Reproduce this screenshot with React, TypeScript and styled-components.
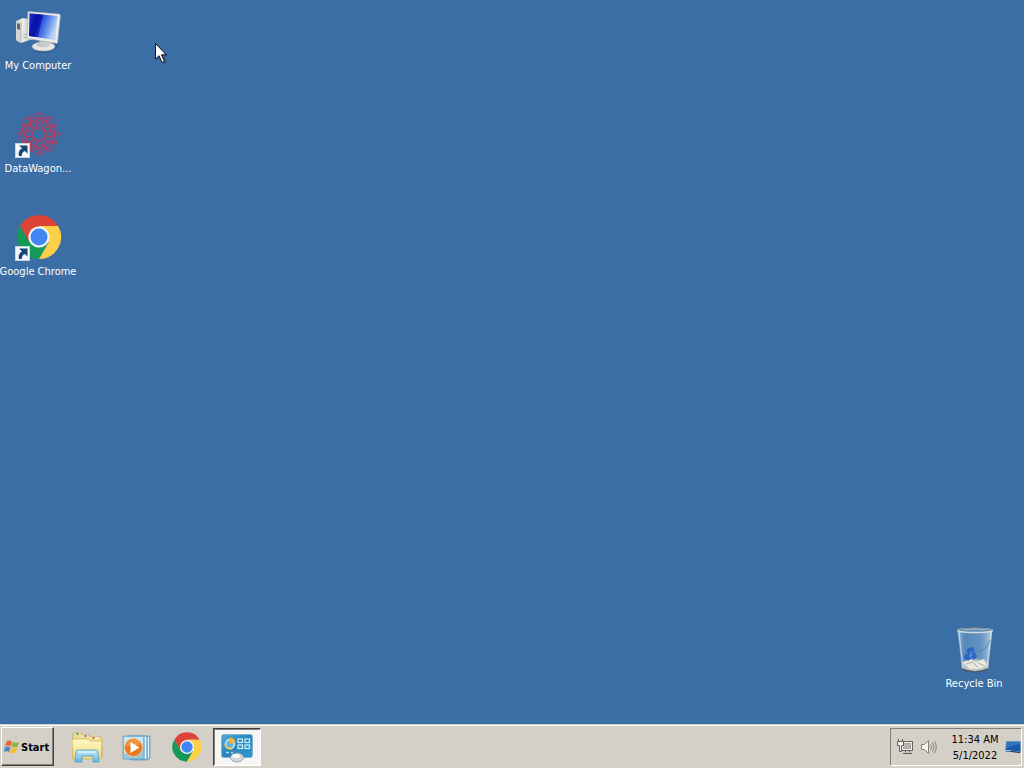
import React from 'react';
import styled, { createGlobalStyle } from 'styled-components';

const GlobalStyle = createGlobalStyle`
  * { box-sizing: border-box; }
  body {
    margin: 0;
    background: #3b6ea5;
    font-family: Tahoma, 'DejaVu Sans Condensed', 'DejaVu Sans', sans-serif;
    font-size: 11px;
    color: #000;
  }
  button { font: inherit; color: inherit; padding: 0; cursor: default; }
  svg { display: block; flex: none; }
`;

const Screen = styled.div`
  position: relative;
  min-height: 100vh;
  display: flex;
  flex-direction: column;
  overflow: hidden;
  background: #3b6ea5;
`;

const Desktop = styled.main`
  flex: 1;
  display: flex;
  justify-content: space-between;
  padding: 8px 12px 33px 0;
`;

const IconColumn = styled.div<{ $end?: boolean }>`
  display: flex;
  flex-direction: column;
  justify-content: ${(p) => (p.$end ? 'flex-end' : 'flex-start')};
  gap: 38px;
`;

const Shortcut = styled.button`
  position: relative;
  width: 76px;
  height: 65px;
  display: flex;
  flex-direction: column;
  align-items: center;
  gap: 3px;
  background: none;
  border: 0;
  color: #fff;
  line-height: 14px;
  white-space: nowrap;
`;

const ArrowBadge = styled.svg`
  position: absolute;
  left: 15px;
  top: 32px;
`;

const Pointer = styled.svg`
  position: absolute;
  left: 154px;
  top: 42px;
`;

const Taskbar = styled.footer`
  height: 44px;
  display: flex;
  align-items: stretch;
  padding: 2px 2px 2px 1px;
  background: #d4d0c8;
  border-top: 1px solid #d4d0c8;
  box-shadow: inset 0 1px #fff;
`;

const StartButton = styled.button`
  width: 53px;
  display: flex;
  align-items: center;
  gap: 1px;
  padding: 1px 0 0 2px;
  background: #d4d0c8;
  border: 1px solid;
  border-color: #fff #404040 #404040 #fff;
  box-shadow: inset -1px -1px #808080;
  font-weight: bold;
`;

const TaskButtons = styled.nav`
  flex: 1;
  display: flex;
  gap: 2px;
  padding: 1px 0 0 9px;
`;

const TaskButton = styled.button<{ $active?: boolean }>`
  width: 48px;
  display: flex;
  align-items: center;
  justify-content: center;
  border: 1px solid;
  border-color: ${(p) => (p.$active ? '#404040 #fff #fff #404040' : 'transparent')};
  box-shadow: ${(p) => (p.$active ? 'inset 1px 1px #808080' : 'none')};
  background: ${(p) => (p.$active ? '#f7f6f4' : 'none')};
`;

const Tray = styled.div`
  display: flex;
  align-items: center;
  margin-top: 1px;
  padding-left: 6px;
  border: 1px solid;
  border-color: #808080 #fff #fff #808080;
`;

const TrayButton = styled.button`
  display: flex;
  background: none;
  border: 0;
  margin-right: 8px;
`;

const Clock = styled.time`
  width: 60px;
  padding-top: 1px;
  text-align: center;
  line-height: 16px;
  white-space: nowrap;
`;

const ShowDesktop = styled.button`
  display: flex;
  background: none;
  border: 0;
`;

const ComputerIcon = () => (
  <svg width="48" height="48" viewBox="-1 0 48 48">
    <defs>
      <linearGradient id="pcScreen" x1="0" y1="0" x2="1" y2="0.35">
        <stop offset="0" stopColor="#1a2fc4" />
        <stop offset="0.38" stopColor="#0712ae" />
        <stop offset="0.5" stopColor="#2b55df" />
        <stop offset="0.75" stopColor="#6593ea" />
        <stop offset="1" stopColor="#b9d4f8" />
      </linearGradient>
      <linearGradient id="pcCase" x1="0" y1="0" x2="1" y2="0">
        <stop offset="0" stopColor="#b9bab9" />
        <stop offset="0.3" stopColor="#f2f1ec" />
        <stop offset="1" stopColor="#bdc1c2" />
      </linearGradient>
    </defs>
    <path d="M18 42 Q35 46 41 36 L44 34 Q42 46 24 45 Z" fill="#24476f" opacity=".4" />
    <path d="M1 13 L8 10 L17 12 L18 31 L6 35 L1 32 Z" fill="url(#pcCase)" />
    <path d="M1 13 L6 14 V35 L1 32 Z" fill="#d6d7d3" />
    <path d="M2 15 L5 16 V22 L2 21 Z" fill="#626a70" />
    <path d="M6 14 V35" stroke="#989c9e" strokeWidth=".7" />
    <path d="M8 27 L17 25 M8 30 L17 28" stroke="#9b9fa0" strokeWidth=".7" />
    <path d="M24 31 L34 33 L32 38 L25 37 Z" fill="#bfc3c4" />
    <ellipse cx="28.5" cy="38.5" rx="11.5" ry="4.5" fill="#e5e6e3" stroke="#abb0b2" strokeWidth=".6" />
    <ellipse cx="28" cy="37" rx="7" ry="2.2" fill="#c5c9ca" />
    <path d="M13 3.5 L44 6 Q45.5 6 45.3 8 L42.5 35.5 L12 30.5 Z" fill="#ebece9" stroke="#a4b0ba" strokeWidth=".6" />
    <path d="M14.5 5.2 L42.6 8 L40 32 L14 28 Z" fill="url(#pcScreen)" />
    <path d="M20 6 L28 7 L23 29 L14 28 Z" fill="#0a12a4" opacity=".65" />
  </svg>
);

const ROTATIONS = [0, 45, 90, 135];
const PETALS = [0, 30, 60, 90, 120, 150, 180, 210, 240, 270, 300, 330];

const DataWagonIcon = () => (
  <svg width="48" height="48" viewBox="-1 0 48 48" fill="none">
    {ROTATIONS.map((angle) => (
      <g key={angle} transform={`rotate(${angle} 24 23)`} stroke="#b83a68" opacity=".7">
        <ellipse cx="24" cy="23" rx="21" ry="12" strokeWidth="1" strokeDasharray="4 1" />
        <path d="M9 8 H39 M9 38 H39" strokeDasharray="3 2" />
      </g>
    ))}
    {PETALS.map((angle) => (
      <g key={angle} transform={`rotate(${angle} 24 23)`} stroke="#d2304c" opacity=".75">
        <path d="M24 17 L20 12 L24 7 L28 12 Z" />
        <path d="M23 3 L25 5" strokeWidth="1.5" />
      </g>
    ))}
    <circle cx="24" cy="23" r="6" stroke="#c9324f" strokeWidth="1.2" strokeDasharray="2 1" />
    <circle cx="24" cy="23" r="15.5" stroke="#d92b3d" strokeWidth="2" strokeDasharray="2 6" />
  </svg>
);

const ChromeIcon = ({ size, viewBox = '0 0 48 48' }: { size: number; viewBox?: string }) => (
  <svg width={size} height={size} viewBox={viewBox}>
    <path d="M4.9 13 A22 22 0 0 1 43.1 13 L24 13 L14.5 29.5 Z" fill="#db4437" />
    <path d="M4.9 13 L14.5 29.5 L33.5 29.5 L24 46 A22 22 0 0 1 4.9 13 Z" fill="#159957" />
    <path d="M43.1 13 A22 22 0 0 1 24 46 L33.5 29.5 L24 13 Z" fill="#fcd048" />
    <circle cx="24" cy="24" r="10.6" fill="#f3f6f8" />
    <circle cx="24" cy="24" r="8.5" fill="#4285f4" />
  </svg>
);

const RecycleIcon = () => (
  <svg width="48" height="48" viewBox="-1 0 48 48">
    <defs>
      <linearGradient id="binGlass" x1="0" y1="0" x2="1" y2="0">
        <stop offset="0" stopColor="#b8d4e9" stopOpacity=".85" />
        <stop offset="0.2" stopColor="#6c9ec8" stopOpacity=".55" />
        <stop offset="0.65" stopColor="#7aaad1" stopOpacity=".6" />
        <stop offset="1" stopColor="#c6dded" stopOpacity=".9" />
      </linearGradient>
    </defs>
    <path d="M6.5 4 L11 43 Q24 49 37 43 L41.5 4 Z" fill="url(#binGlass)" />
    <path d="M10.5 36 Q23 30 38 36 L37 43 Q24 49 11 43 Z" fill="#b9bfc2" />
    <path d="M12 37 L19 33 L25 36 L33 33 L36 40 L28 43 L19 43 Z" fill="#e9e8df" />
    <path d="M15 38 L22 36 L27 42 M27 37 L34 40" stroke="#a1a2a0" strokeWidth=".8" fill="none" />
    <path d="M11 43 Q24 49 37 43" stroke="#4f5a62" strokeWidth="1.4" fill="none" />
    <path d="M8 6 L12 42 M40 6 L36 42" stroke="#dce9f2" strokeWidth="1" opacity=".7" />
    <path d="M28 26 Q36 23 39 14" stroke="#466b8c" strokeWidth="1" fill="none" opacity=".7" />
    <g fill="#245fd0" opacity=".85">
      <path d="M17 22 L22 21 L24 26 L21 25 L18 28 L15 26 Z" />
      <path d="M14 28 L19 28 L18 31 L21 32 L17 35 L13 32 Z" />
      <path d="M23 26 L26 30 L23 34 L20 30 L22 30 L20 27 Z" />
    </g>
    <ellipse cx="24" cy="4.5" rx="17.2" ry="2" fill="#6490b5" stroke="#d7dddf" strokeWidth="1.5" />
    <path d="M7 4 Q24 0 41 4" fill="none" stroke="#5d6c77" strokeWidth=".8" />
  </svg>
);

const WindowsLogo = () => (
  <svg width="16" height="16" viewBox="0 0 16 16">
    <path d="M3 2 Q5 .7 8 2.5 L6.6 7.2 Q4 5.7 1 7 Z" fill="#e8683e" />
    <path d="M8.7 3 Q12 4.5 15 2.8 L13.6 7.8 Q10 9 7.3 7.5 Z" fill="#8bb943" />
    <path d="M.8 8 Q3.6 6.7 6.3 8.2 L5 13 Q2.7 11.6 0 13 Z" fill="#4e87c6" />
    <path d="M7 8.6 Q10 10 13.3 8.8 L11.8 13.5 Q8.7 15 5.7 13.4 Z" fill="#f2be36" />
  </svg>
);

const ExplorerIcon = () => (
  <svg width="32" height="32" viewBox="0 -1 32 32">
    <defs>
      <linearGradient id="folderFront" x1="0" y1="0" x2="0" y2="1">
        <stop offset="0" stopColor="#fff9c9" />
        <stop offset="1" stopColor="#eed878" />
      </linearGradient>
      <linearGradient id="folderStand" x1="0" y1="0" x2="0" y2="1">
        <stop offset="0" stopColor="#c4e9f8" />
        <stop offset="1" stopColor="#65b7df" />
      </linearGradient>
    </defs>
    <path d="M2 2 Q2 1 4 1 H10 L12 3 H18 L20 5 H29 Q31 5 31 7 V25 H2 Z" fill="#f0dd90" stroke="#c6aa57" strokeWidth=".8" />
    <path d="M4 2 H9 M12 4 H17 M20 6 H28" stroke="#fff8d8" strokeWidth="1.5" />
    <path d="M5 2 H8" stroke="#4c9861" strokeWidth="1.5" />
    <path d="M13 4 H16" stroke="#647eb0" strokeWidth="1.5" />
    <path d="M21 6 H24" stroke="#bd7447" strokeWidth="1.5" />
    <path d="M1 9 Q1 7 3 7 H17 L19 9 H29 Q31 9 31 11 L30 27 H2 Z" fill="url(#folderFront)" stroke="#d0b761" strokeWidth=".8" />
    <path d="M4 30 L5 20 Q5 18 7 18 H25 Q27 18 27 20 L28 30 H22 V24 H11 V30 Z" fill="url(#folderStand)" stroke="#4f9ac7" strokeWidth=".8" />
    <path d="M7 20 H25" stroke="#effbff" />
  </svg>
);

const MediaIcon = () => (
  <svg width="32" height="32" viewBox="0 -1 32 32">
    <path d="M10 4 H29 V26 L26 28 H10 Z" fill="#81badc" stroke="#5c9fc7" strokeWidth=".8" />
    <path d="M7 4 H26 V27 H7 Z" fill="#b8ddec" stroke="#5da1c7" strokeWidth=".8" />
    <path d="M2 4 H23 V27 H2 Z" fill="#98c7df" stroke="#619fc1" strokeWidth=".8" />
    <path d="M3 5 H22 V14 L3 22 Z" fill="#cde7f0" />
    <path d="M24.5 5 V27 M27.5 5 V26" stroke="#e3f4fa" strokeWidth="1" />
    <circle cx="12.5" cy="15.5" r="9" fill="#e77921" stroke="#f7c38c" strokeWidth="1" />
    <path d="M4.5 14.5 Q7 7.5 13 7.5 Q19 7.5 20 12.5 Z" fill="#f5a24c" opacity=".7" />
    <path d="M9.5 10 L18.5 15.5 L9.5 21 Z" fill="#fff" />
  </svg>
);

const ControlPanelIcon = () => (
  <svg width="34" height="32" viewBox="0 0 34 32">
    <defs>
      <linearGradient id="panelBlue" x1="0" y1="0" x2="1" y2="1">
        <stop offset="0" stopColor="#52a9d5" />
        <stop offset="0.5" stopColor="#2585bd" />
        <stop offset="1" stopColor="#3099cb" />
      </linearGradient>
    </defs>
    <rect x="1.5" y="3.5" width="31" height="23" rx="2" fill="url(#panelBlue)" stroke="#82b6cc" />
    <circle cx="10" cy="13" r="4.5" fill="#64b8df" stroke="#c9eefa" strokeWidth="1.5" />
    <path d="M10 13 V6.5 A6 6 0 0 1 15.5 11 Z" fill="#ffb32d" />
    <path d="M5 13 A5 5 0 0 0 13 17" stroke="#f4bb4b" strokeWidth="1.4" fill="none" />
    <g fill="none" stroke="#c7eafa" strokeWidth="1.3">
      <rect x="18" y="8" width="4.5" height="3.5" /><rect x="25" y="8" width="4.5" height="3.5" />
      <rect x="18" y="14" width="4.5" height="3.5" /><rect x="25" y="14" width="4.5" height="3.5" />
    </g>
    <path d="M6 21.5 H9 M11 21.5 H13" stroke="#aadcf0" strokeWidth="1.3" />
    <ellipse cx="17" cy="26.5" rx="6.5" ry="4.5" fill="#d2d9dd" stroke="#8799a5" strokeWidth=".8" />
    <ellipse cx="16" cy="25" rx="4" ry="2" fill="#fafafa" />
  </svg>
);

const NetworkIcon = () => (
  <svg width="16" height="16" viewBox="0 0 16 16" fill="none" stroke="#65625e">
    <rect x="4.5" y="2.5" width="11" height="9" fill="#f2f0ed" />
    <rect x="6.5" y="4.5" width="7" height="5" fill="#b9b6b1" stroke="#aaa69f" />
    <path d="M8.5 12 V13.5 M12.5 12 V13.5 M6 14.5 H15" />
    <path d="M.5 2.5 H6.5 V6.5 H4.5 V12.5 H2.5 V6.5 H.5 Z" fill="#f5f3f0" />
    <path d="M1.5 0 V2.5 M5.5 0 V2.5" />
  </svg>
);

const VolumeIcon = () => (
  <svg width="16" height="16" viewBox="0 0 16 16" fill="none" stroke="#85827c">
    <path d="M.5 5.5 H3.5 L7.5 1.5 V14.5 L3.5 10.5 H.5 Z" fill="#f5f4f1" />
    <path d="M9.5 5.5 Q11.5 8 9.5 10.5 M11.5 3.5 Q14.5 8 11.5 12.5 M13.5 2 Q17 8 13.5 14" />
  </svg>
);

const DesktopIcon = () => (
  <svg width="16" height="16" viewBox="0 0 16 16">
    <path d="M1.5 2.5 H15.5 V13 L.5 11.5 Z" fill="#1859aa" stroke="#6799c2" />
    <path d="M2 3 H15 V5 Q7 6 1 10 Z" fill="#3176bd" />
    <path d="M1 12 L15 13.5" stroke="#112f52" />
    <path d="M1 11.5 L6 12" stroke="#b4d7ea" />
  </svg>
);

const LinkArrow = () => (
  <ArrowBadge width="15" height="15" viewBox="0 0 15 15">
    <rect x=".5" y=".5" width="14" height="14" fill="#f4f8fb" stroke="#c5d5e1" />
    <path d="M4 2.5 H12.5 V10.5 L9.8 8 Q6.8 9 6.8 13 H4 Q2.5 8 7 5.3 Z" fill="#174578" />
  </ArrowBadge>
);

export default function App() {
  return (
    <Screen>
      <GlobalStyle />
      <Desktop>
        <IconColumn>
          <Shortcut><ComputerIcon /><span>My Computer</span></Shortcut>
          <Shortcut><DataWagonIcon /><LinkArrow /><span>DataWagon...</span></Shortcut>
          <Shortcut><ChromeIcon size={48} viewBox="-1 1 48 48" /><LinkArrow /><span>Google Chrome</span></Shortcut>
        </IconColumn>
        <IconColumn $end>
          <Shortcut><RecycleIcon /><span>Recycle Bin</span></Shortcut>
        </IconColumn>
      </Desktop>
      <Taskbar>
        <StartButton><WindowsLogo />Start</StartButton>
        <TaskButtons aria-label="Taskbar">
          <TaskButton aria-label="Windows Explorer"><ExplorerIcon /></TaskButton>
          <TaskButton aria-label="Windows Media Player"><MediaIcon /></TaskButton>
          <TaskButton aria-label="Google Chrome"><ChromeIcon size={32} /></TaskButton>
          <TaskButton aria-label="Control Panel" $active><ControlPanelIcon /></TaskButton>
        </TaskButtons>
        <Tray>
          <TrayButton aria-label="Network"><NetworkIcon /></TrayButton>
          <TrayButton aria-label="Volume"><VolumeIcon /></TrayButton>
          <Clock dateTime="2022-05-01T11:34">11:34 AM<br />5/1/2022</Clock>
          <ShowDesktop aria-label="Show desktop"><DesktopIcon /></ShowDesktop>
        </Tray>
      </Taskbar>
      <Pointer width="14" height="23" viewBox="0 0 14 23" aria-hidden="true">
        <path d="M3 3 V19 L7 15 L10 22 L13 20 L10 14 H14 Z" fill="#1c3a5c" opacity=".4" />
        <path d="M1.5 1.5 V17 L5 13.7 L8 20.5 L10.5 19.4 L7.5 12.8 H12.3 Z" fill="#fff" stroke="#111" strokeWidth="1" />
      </Pointer>
    </Screen>
  );
}
